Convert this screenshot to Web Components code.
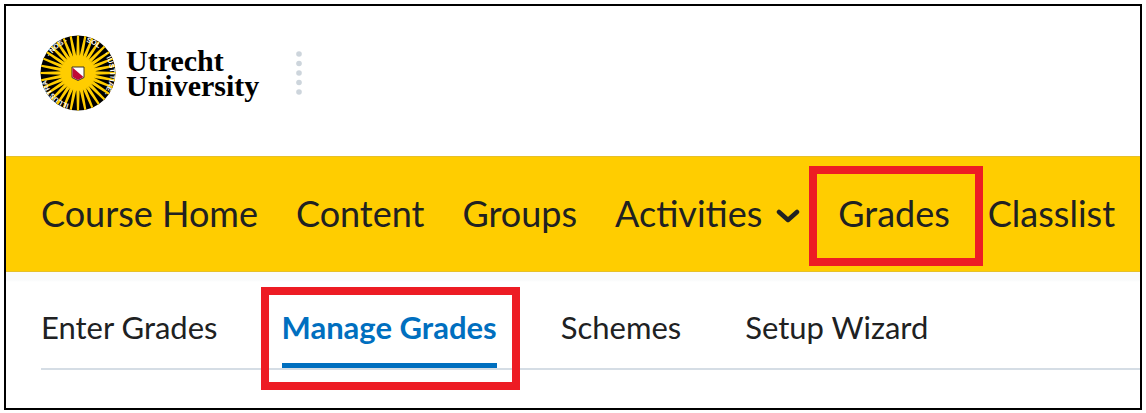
<!DOCTYPE html>
<html lang="en">
<head>
<meta charset="utf-8">
<title>Manage Grades - Utrecht University</title>
<style>
  html, body { height: 100%; }
  body {
    margin: 0;
    padding: 4px 4px 3px 4px;
    box-sizing: border-box;
    background: #fff;
    color: #202122;
    font-family: Lato, "Open Sans", sans-serif;
  }
</style>
</head>
<body>
<course-page>
  <uu-header slot="header"></uu-header>
  <course-nav slot="nav">
    <nav-item>Course Home</nav-item>
    <nav-item>Content</nav-item>
    <nav-item>Groups</nav-item>
    <nav-item menu>Activities</nav-item>
    <nav-item marked>Grades</nav-item>
    <nav-item>Classlist</nav-item>
  </course-nav>
  <grade-tabs>
    <grade-tab>Enter Grades</grade-tab>
    <grade-tab current marked>Manage Grades</grade-tab>
    <grade-tab>Schemes</grade-tab>
    <grade-tab>Setup Wizard</grade-tab>
  </grade-tabs>
</course-page>

<script>
const define = (name, html, setup) => {
  const template = document.createElement('template');
  template.innerHTML = html;
  customElements.define(name, class extends HTMLElement {
    constructor() {
      super();
      this.attachShadow({ mode: 'open' }).append(template.content.cloneNode(true));
    }
    connectedCallback() { if (setup) setup(this, this.shadowRoot); }
  });
};

define('course-page', `
  <style>
    :host { display: block; box-sizing: border-box; min-height: 100%; border: 2px solid #000; background: #fff; }
  </style>
  <slot name="header"></slot>
  <slot name="nav"></slot>
  <main><slot></slot></main>`);

define('uu-seal', `
  <style>
    :host { display: block; width: 76px; height: 76px; }
    svg { display: block; width: 100%; height: 100%; }
    text { font: bold 7px "Liberation Sans", sans-serif; fill: #fff; }
  </style>
  <svg viewBox="-38 -38 76 76" role="img" aria-label="Seal of Utrecht University">
    <circle r="37.5" fill="#000"/>
    <path id="rays" fill="#ffcd00"/>
    <circle r="17.5" fill="#ffcd00"/>
    <path id="ring" d="M0-32.2A32.2 32.2 0 0 1 0 32.2A32.2 32.2 0 0 1 0-32.2" fill="none"/>
    <text><textPath href="#ring" startOffset="8">SOL</textPath></text>
    <text><textPath href="#ring" startOffset="30">· IUSTITIAE ·</textPath></text>
    <text><textPath href="#ring" startOffset="110">ILLUSTRA</textPath></text>
    <text><textPath href="#ring" startOffset="168">· NOS ·</textPath></text>
    <path d="M-6-6H6V4.500L0 7.500L-6 4.500Z" fill="#fff" stroke="#3d3520" stroke-width="1"/>
    <path d="M-5.500-5.500L5.500 4L0 7L-5.500 4Z" fill="#c00a35"/>
  </svg>`, (host, root) => {
    const count = 32;
    let d = '';
    for (let i = 0; i < count; i++) {
      const a = i * 2 * Math.PI / count;
      const h = Math.PI / count;
      const p = (r, t) => (r * Math.sin(t)).toFixed(2) + ' ' + (-r * Math.cos(t)).toFixed(2);
      d += 'M' + p(17, a - h) + 'L' + p(37.5, a - 0.028) + 'L' + p(37.5, a + 0.028) + 'L' + p(17, a + h) + 'Z';
    }
    root.getElementById('rays').setAttribute('d', d);
  });

define('uu-header', `
  <style>
    :host { display: block; }
    header { display: flex; align-items: center; height: 150px; box-sizing: border-box; padding: 0 34px 16px; }
    a { display: flex; align-items: center; gap: 10px; color: #000; text-decoration: none; }
    .name { width: min-content; font: bold 30px/25px "Liberation Serif", serif; }
    .dots { display: block; width: 6px; height: 44px; margin-left: 37px; fill: #cdd5dc; }
  </style>
  <header>
    <a href="#home">
      <uu-seal></uu-seal>
      <span class="name">Utrecht University</span>
    </a>
    <svg class="dots" viewBox="0 0 6 44" aria-hidden="true">
      <circle cx="3" cy="3" r="2.800"/><circle cx="3" cy="12.500" r="2.800"/><circle cx="3" cy="22" r="2.800"/><circle cx="3" cy="31.500" r="2.800"/><circle cx="3" cy="41" r="2.800"/>
    </svg>
  </header>`);

define('course-nav', `
  <style>
    :host { display: block; background: #ffcd00; border: solid #e6c029; border-width: 1px 0; }
    nav { display: flex; align-items: center; gap: 38px; height: 114px; box-sizing: border-box; padding: 0 34px 2px 35px; }
  </style>
  <nav aria-label="Course"><slot></slot></nav>`);

define('nav-item', `
  <style>
    :host { display: block; position: relative; flex: none; }
    a, button { display: flex; align-items: center; gap: 14px; margin: 0; padding: 0; border: 0; background: none; color: #202122; font: 36px/44px Lato, sans-serif; text-decoration: none; white-space: nowrap; }
    svg { width: 24px; height: 16px; margin-top: 6px; }
    :host([marked])::after { content: ""; position: absolute; inset: -25px -33px -31px -29px; border: 8px solid #ed1c24; pointer-events: none; }
  </style>
  <a href="#"><slot></slot></a>`, (host, root) => {
    if (!host.hasAttribute('menu')) return;
    const button = document.createElement('button');
    button.type = 'button';
    button.setAttribute('aria-haspopup', 'true');
    button.innerHTML = '<slot></slot><svg viewBox="0 0 24 16" fill="none" stroke="#202122" stroke-width="4.5" stroke-linecap="round" stroke-linejoin="round" aria-hidden="true"><path d="M3 4L12 12L21 4"/></svg>';
    root.querySelector('a').replaceWith(button);
  });

define('grade-tabs', `
  <style>
    :host { display: block; padding: 0 0 38px 35px; background: linear-gradient(#f9fafb 8px, #fff 10px); }
    nav { display: flex; gap: 64px; border-bottom: 2px solid #d5dde5; }
  </style>
  <nav aria-label="Grades"><slot></slot></nav>`);

define('grade-tab', `
  <style>
    :host { display: block; position: relative; flex: none; }
    a { display: block; padding: 37px 0 18px; border-bottom: 5px solid transparent; color: #202122; font: 31px/36px Lato, sans-serif; text-decoration: none; white-space: nowrap; }
    :host([current]) a { color: #006fbf; font-weight: 700; border-color: #006fbf; }
    :host([marked])::after { content: ""; position: absolute; inset: 15px -23px -22px -21px; border: 8px solid #ed1c24; pointer-events: none; }
  </style>
  <a href="#"><slot></slot></a>`, (host, root) => {
    if (host.hasAttribute('current')) root.querySelector('a').setAttribute('aria-current', 'page');
  });
</script>
</body>
</html>
